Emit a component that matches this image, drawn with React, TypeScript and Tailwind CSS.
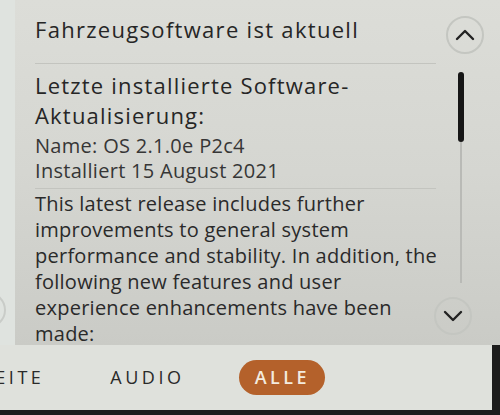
import React from "react";

const font = { fontFamily: '"Open Sans", "Noto Sans", sans-serif' };

function ChevronButton({ dir }: { dir: "up" | "down" }) {
  return (
    <div className="w-[38px] h-[38px] rounded-full border-2 border-[#c4c6c1] flex items-center justify-center">
      <svg width="20" height="12" viewBox="0 0 20 12" fill="none">
        <path
          d={dir === "up" ? "M2 10 L10 2 L18 10" : "M2 2 L10 10 L18 2"}
          stroke="#222"
          strokeWidth="2.4"
          strokeLinecap="round"
          strokeLinejoin="round"
        />
      </svg>
    </div>
  );
}

export default function App() {
  return (
    <div className="w-[500px] h-[415px] bg-[#1c1c1c] overflow-hidden flex flex-col" style={font}>
      <div className="flex h-[345px] shrink-0">
        {/* left neighbour panel edge */}
        <div className="w-[15px] bg-[#dfe3df] relative overflow-hidden">
          <div className="absolute left-[-30px] top-[292px] w-[36px] h-[36px] rounded-full border-2 border-[#c9ccc8]" />
        </div>

        <div className="flex-1 flex bg-gradient-to-b from-[#dcddd8] via-[#d5d6d1] to-[#cacbc6] shadow-[0_2px_3px_rgba(0,0,0,0.15)]">
          <div className="w-[421px] flex flex-col pl-[20px] text-[#262626] whitespace-nowrap overflow-hidden">
            <div className="h-[64px] shrink-0 pb-[5px] flex items-center border-b border-[#c3c4bf]">
              <span className="text-[22px] tracking-[1.3px]">Fahrzeugsoftware ist aktuell</span>
            </div>

            <div className="shrink-0 pt-[6px] pb-[5px] border-b border-[#c3c4bf]">
              <div className="text-[22px] leading-[30px] tracking-[1.2px]">
                Letzte installierte Software-
                <br />
                Aktualisierung:
              </div>
              <div className="text-[20px] leading-[25px] tracking-[0.3px] text-[#363636] mt-[3px]">
                <div>Name: OS 2.1.0e P2c4</div>
                <div>Installiert 15 August 2021</div>
              </div>
            </div>

            <div className="shrink-0 pt-[2px] text-[20px] leading-[26px] tracking-[0.25px] text-[#2a2a2a]">
              This latest release includes further
              <br />
              improvements to general system
              <br />
              performance and stability. In addition, the
              <br />
              following new features and user
              <br />
              experience enhancements have been
              <br />
              made:
            </div>
          </div>

          <div className="flex-1 flex flex-col items-start pt-[16px] pb-[10px]">
            <div className="ml-[10px]">
              <ChevronButton dir="up" />
            </div>
            <div className="flex-1 ml-[22px] w-[6px] flex flex-col items-center mt-[18px] mb-[14px]">
              <div className="w-[6px] h-[70px] rounded-full bg-[#161616]" />
              <div className="w-[2px] flex-1 bg-[#b9bab6]" />
            </div>
            <div className="ml-[-2px]">
              <ChevronButton dir="down" />
            </div>
          </div>
        </div>
      </div>

      <div className="h-[65px] shrink-0 bg-[#dfe1dc] flex items-center text-[18px] tracking-[3.5px] text-[#2a2a2a] border-r-[8px] border-[#1c1c1c]">
        <span className="ml-[-18px]">SEITE</span>
        <span className="ml-[66px]">AUDIO</span>
        <span className="ml-[55px] w-[86px] h-[35px] rounded-full bg-[#b4612b] text-[#f3ebdf] flex items-center justify-center font-semibold">
          ALLE
        </span>
      </div>
    </div>
  );
}
